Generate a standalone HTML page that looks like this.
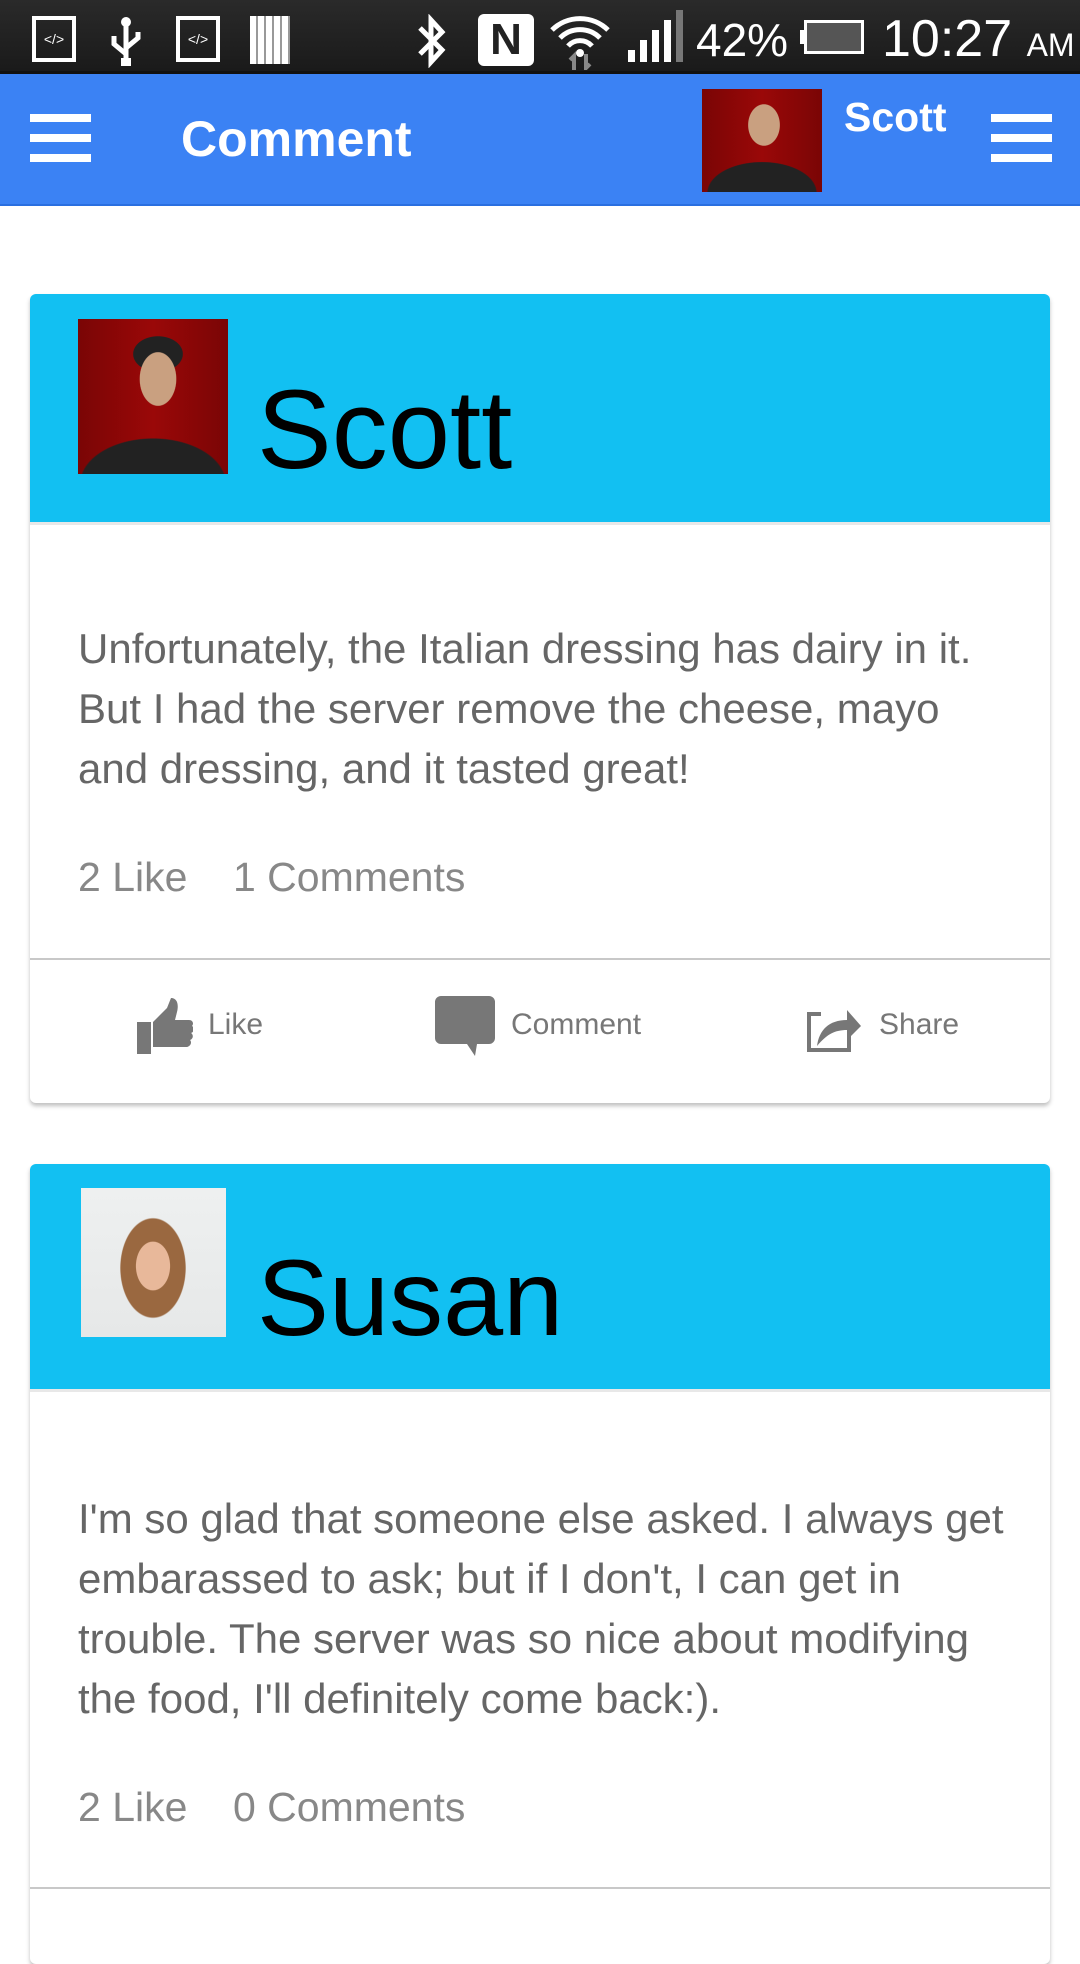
<!DOCTYPE html>
<html><head><meta charset="utf-8"><style>
*{margin:0;padding:0;box-sizing:border-box}
body{width:1080px;height:1920px;background:#fff;font-family:"Liberation Sans",sans-serif;position:relative;overflow:hidden}
.abs{position:absolute}
.sb{left:0;top:0;width:1080px;height:74px;background:linear-gradient(#2a2a2a,#1a1a1a);border-bottom:3px solid #111}
.hdr{left:0;top:74px;width:1080px;height:132px;background:#3b82f4;border-bottom:2px solid #2a6fe0}
.hb{width:61px;height:8px;background:#fff}
.card{left:30px;width:1020px;background:#fff;border-radius:6px;box-shadow:0 3px 4px rgba(0,0,0,.25);overflow:hidden}
.ch{position:absolute;left:0;top:0;width:1020px;background:#12c0f2;border-bottom:3px solid #e8e8e8}
.name{position:absolute;font-size:112px;color:#000;line-height:1}
.body{position:absolute;left:48px;font-size:42px;line-height:60px;color:#666;white-space:nowrap}
.stats{position:absolute;left:48px;font-size:41px;color:#888}
.div{position:absolute;left:0;width:1020px;height:2px;background:#c8c8c8}
.act{position:absolute;font-size:30px;color:#777}
</style></head><body>
<div class="abs sb"></div>
<div class="abs" style="left:32px;top:16px;width:44px;height:46px;border:4px solid #fff;color:#fff;font-size:14px;text-align:center;line-height:38px">&lt;/&gt;</div>
<svg class="abs" style="left:104px;top:14px" width="44" height="54" viewBox="0 0 44 54"><path d="M22 4v44M22 40l-12-10v-8M22 34l12-10v-6" stroke="#fff" stroke-width="5" fill="none"/><circle cx="22" cy="8" r="5" fill="#fff"/><rect x="17" y="44" width="10" height="8" fill="#fff"/></svg>
<div class="abs" style="left:176px;top:16px;width:44px;height:46px;border:4px solid #fff;color:#fff;font-size:14px;text-align:center;line-height:38px">&lt;/&gt;</div>
<div class="abs" style="left:250px;top:16px;width:40px;height:48px;background:repeating-linear-gradient(90deg,#fff 0 6px,#999 6px 8px)"></div>
<svg class="abs" style="left:414px;top:14px" width="34" height="54" viewBox="0 0 34 54"><path d="M6 14l22 22-11 12V6l11 12L6 40" stroke="#fff" stroke-width="5" fill="none"/></svg>
<div class="abs" style="left:478px;top:14px;width:56px;height:52px;background:#fff;border-radius:6px;color:#222;font-size:44px;font-weight:bold;text-align:center;line-height:52px">N</div>
<svg class="abs" style="left:548px;top:8px" width="64" height="62" viewBox="0 0 64 62"><path d="M4 22a40 40 0 0 1 56 0M12 30a28 28 0 0 1 40 0M20 38a16 16 0 0 1 24 0" stroke="#fff" stroke-width="5" fill="none"/><circle cx="32" cy="45" r="4" fill="#fff"/><path d="M26 62V48l-4 4M38 46v14l4-4" stroke="#888" stroke-width="4" fill="none"/></svg>
<div class="abs" style="left:628px;top:50px;width:7px;height:12px;background:#fff"></div>
<div class="abs" style="left:640px;top:40px;width:7px;height:22px;background:#fff"></div>
<div class="abs" style="left:652px;top:30px;width:7px;height:32px;background:#fff"></div>
<div class="abs" style="left:664px;top:20px;width:7px;height:42px;background:#fff"></div>
<div class="abs" style="left:676px;top:10px;width:7px;height:52px;background:#777"></div>
<div class="abs" style="left:696px;top:10px;color:#fff;font-size:46px;line-height:60px">42%</div>
<div class="abs" style="left:804px;top:20px;width:60px;height:34px;border:3px solid #fff;background:#555"></div>
<div class="abs" style="left:800px;top:30px;width:5px;height:14px;background:#fff"></div>
<div class="abs" style="left:882px;top:8px;color:#fff;font-size:52px;line-height:62px">10:27 <span style="font-size:32px">AM</span></div>

<div class="abs hdr"></div>
<div class="abs hb" style="left:30px;top:114px"></div>
<div class="abs hb" style="left:30px;top:134px"></div>
<div class="abs hb" style="left:30px;top:154px"></div>
<div class="abs" style="left:181px;top:108px;color:#fff;font-size:50px;font-weight:bold;line-height:62px">Comment</div>
<div class="abs" style="left:702px;top:89px;width:120px;height:103px;background:radial-gradient(ellipse 26px 34px at 62px 36px,#c9a080 60%,transparent 62%),radial-gradient(ellipse 60px 34px at 60px 104px,#222 90%,transparent 92%),linear-gradient(90deg,#7a0505,#9a0808,#7a0505)"></div>
<div class="abs" style="left:844px;top:92px;color:#fff;font-size:41px;font-weight:bold;line-height:50px">Scott</div>
<div class="abs hb" style="left:991px;top:114px"></div>
<div class="abs hb" style="left:991px;top:134px"></div>
<div class="abs hb" style="left:991px;top:154px"></div>

<div class="abs card" style="top:294px;height:809px">
 <div class="ch" style="height:231px"></div>
 <div class="abs" style="left:48px;top:25px;width:150px;height:155px;background:radial-gradient(ellipse 30px 44px at 80px 60px,#c9a080 60%,transparent 62%),radial-gradient(ellipse 35px 25px at 80px 35px,#222 70%,transparent 72%),radial-gradient(ellipse 80px 50px at 75px 165px,#222 90%,transparent 92%),linear-gradient(90deg,#7a0505,#9a0808,#7a0505)"></div>
 <div class="name" style="left:227px;top:80px">Scott</div>
 <div class="body" style="top:325px">Unfortunately, the Italian dressing has dairy in it.<br>But I had the server remove the cheese, mayo<br>and dressing, and it tasted great!</div>
 <div class="stats" style="top:560px">2 Like&nbsp;&nbsp;&nbsp;&nbsp;1 Comments</div>
 <div class="div" style="top:664px"></div>
 <svg class="abs" style="left:107px;top:704px" width="56" height="56" viewBox="0 0 56 56"><path d="M0 24h14v32H0zM16 24l14-14 4-10c6 0 8 6 6 14l-2 8h14c4 0 5 4 3 6 3 2 2 6-1 7 3 2 2 6-1 7 2 2 1 6-3 7H16z" fill="#777"/></svg>
 <div class="act" style="left:178px;top:714px">Like</div>
 <svg class="abs" style="left:405px;top:702px" width="60" height="60" viewBox="0 0 60 60"><path d="M6 0h48a6 6 0 0 1 6 6v36a6 6 0 0 1-6 6H42l-2 12-8-12H6a6 6 0 0 1-6-6V6a6 6 0 0 1 6-6z" fill="#777"/></svg>
 <div class="act" style="left:481px;top:714px">Comment</div>
 <svg class="abs" style="left:777px;top:708px" width="56" height="50" viewBox="0 0 56 50"><path d="M2 14h12v-4H0v40h44V34h-4v12H4V14z" fill="#777"/><path d="M10 44c2-16 12-26 30-26V8l14 16-14 14V28c-12 0-20 4-30 16z" fill="#777"/></svg>
 <div class="act" style="left:849px;top:714px">Share</div>
</div>

<div class="abs card" style="top:1164px;height:800px">
 <div class="ch" style="height:228px"></div>
 <div class="abs" style="left:51px;top:24px;width:145px;height:149px;background:radial-gradient(ellipse 28px 40px at 72px 78px,#e8b89a 60%,transparent 62%),radial-gradient(ellipse 46px 70px at 72px 80px,#9a6840 70%,transparent 72%),linear-gradient(#eef0f0,#e6e8e8)"></div>
 <div class="name" style="left:227px;top:80px;font-size:108px">Susan</div>
 <div class="body" style="top:325px">I'm so glad that someone else asked. I always get<br>embarassed to ask; but if I don't, I can get in<br>trouble. The server was so nice about modifying<br>the food, I'll definitely come back:).</div>
 <div class="stats" style="top:620px">2 Like&nbsp;&nbsp;&nbsp;&nbsp;0 Comments</div>
 <div class="div" style="top:723px"></div>
</div>
</body></html>
